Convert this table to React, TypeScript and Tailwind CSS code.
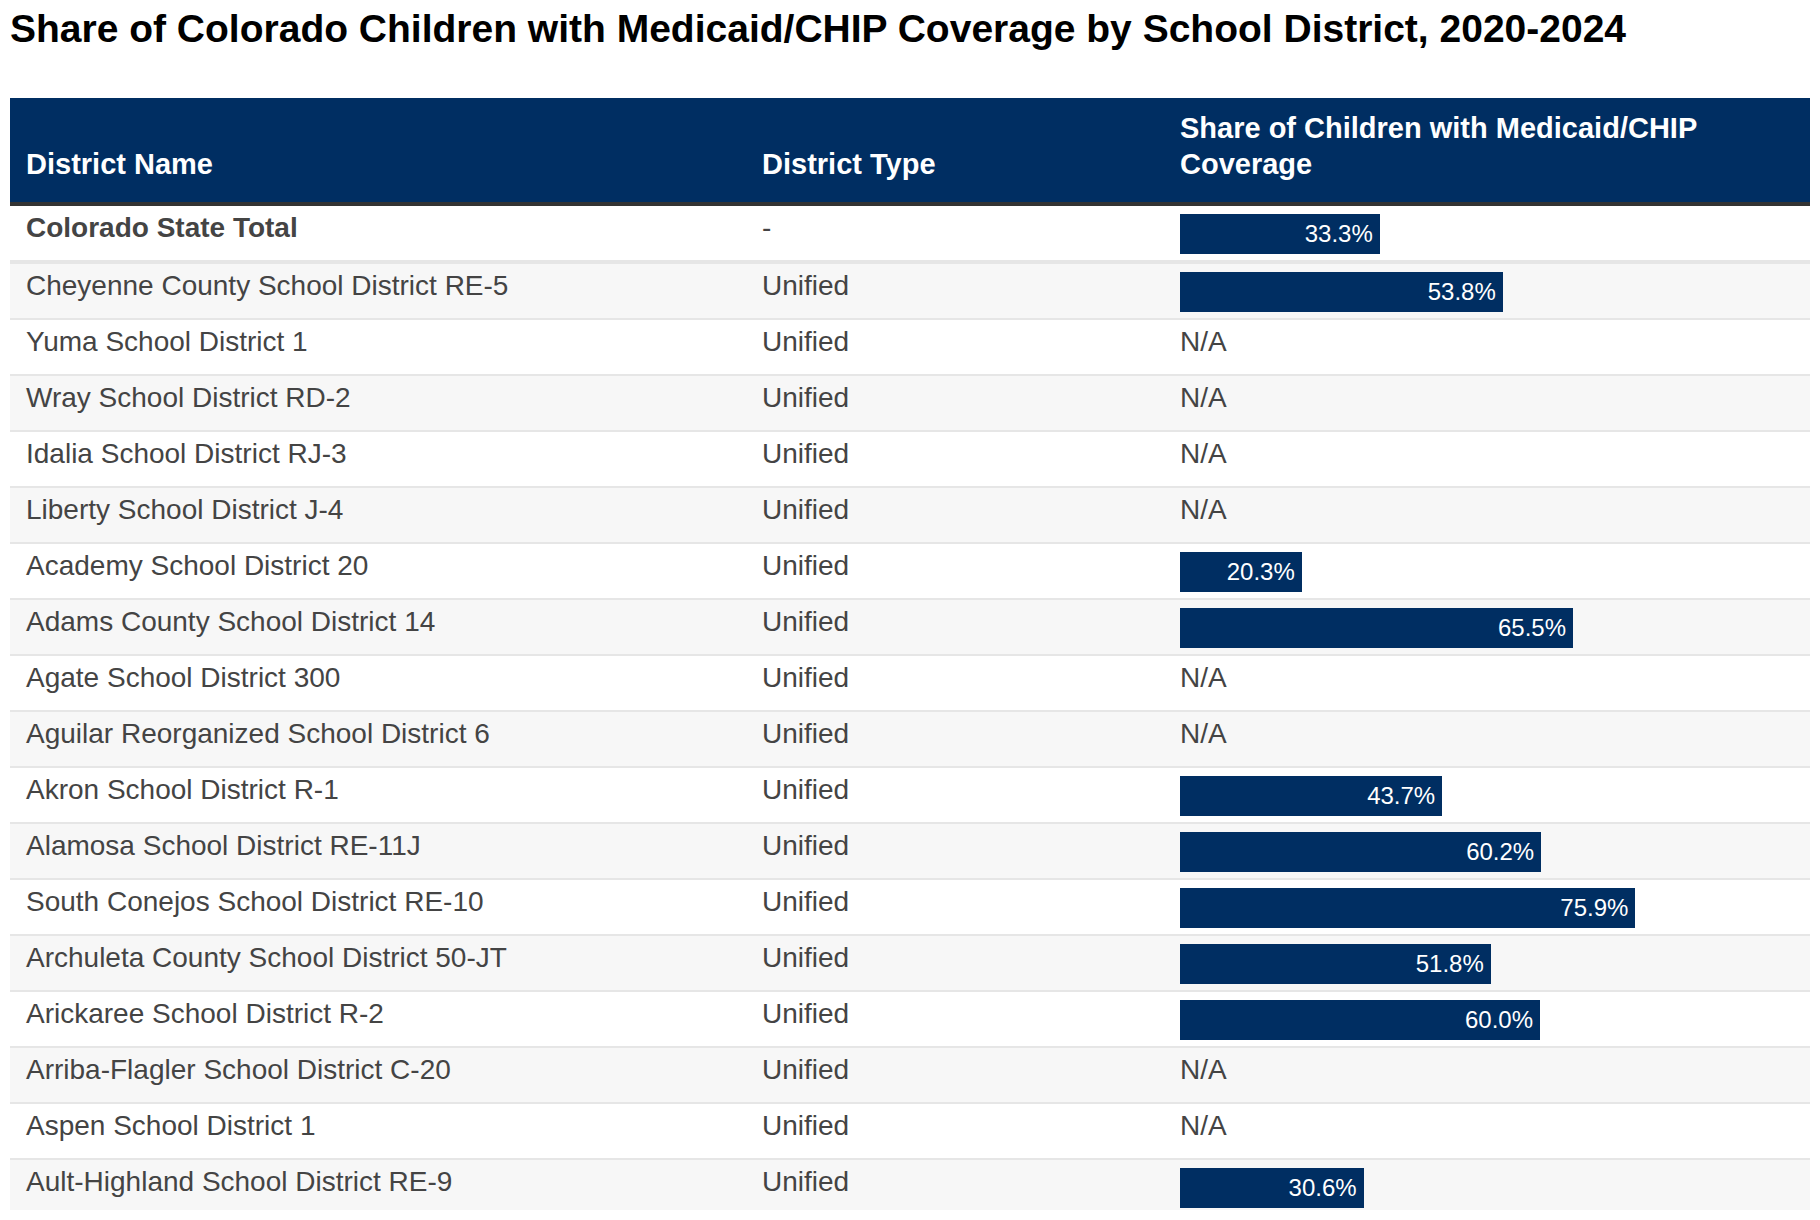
import React from 'react';

type Row = {
  name: string;
  type: string;
  share: number | null;
  total?: boolean;
};

const rows: Row[] = [
  { name: 'Colorado State Total', type: '-', share: 33.3, total: true },
  { name: 'Cheyenne County School District RE-5', type: 'Unified', share: 53.8 },
  { name: 'Yuma School District 1', type: 'Unified', share: null },
  { name: 'Wray School District RD-2', type: 'Unified', share: null },
  { name: 'Idalia School District RJ-3', type: 'Unified', share: null },
  { name: 'Liberty School District J-4', type: 'Unified', share: null },
  { name: 'Academy School District 20', type: 'Unified', share: 20.3 },
  { name: 'Adams County School District 14', type: 'Unified', share: 65.5 },
  { name: 'Agate School District 300', type: 'Unified', share: null },
  { name: 'Aguilar Reorganized School District 6', type: 'Unified', share: null },
  { name: 'Akron School District R-1', type: 'Unified', share: 43.7 },
  { name: 'Alamosa School District RE-11J', type: 'Unified', share: 60.2 },
  { name: 'South Conejos School District RE-10', type: 'Unified', share: 75.9 },
  { name: 'Archuleta County School District 50-JT', type: 'Unified', share: 51.8 },
  { name: 'Arickaree School District R-2', type: 'Unified', share: 60.0 },
  { name: 'Arriba-Flagler School District C-20', type: 'Unified', share: null },
  { name: 'Aspen School District 1', type: 'Unified', share: null },
  { name: 'Ault-Highland School District RE-9', type: 'Unified', share: 30.6 },
];

// bar is 600px wide at 100%
const BAR_SCALE = 6;

const App: React.FC = () => {
  return (
    <main className="min-h-screen bg-white font-['Liberation_Sans',Arial,sans-serif] text-[#444]">
      {/* Title */}
      <h1 className="pl-[10px] pt-[6px] mb-[47px] text-[39px] leading-[45px] font-bold text-black">
        Share of Colorado Children with Medicaid/CHIP Coverage by School District, 2020-2024
      </h1>

      {/* Table */}
      <div className="mx-[10px]">
        <div className="grid grid-cols-[736px_418px_1fr] items-end bg-[#002e62] text-white border-b-4 border-[#333] text-[29px] leading-[36px] font-bold">
          <div className="px-[16px] pt-[12px] pb-[20px]">District Name</div>
          <div className="px-[16px] pt-[12px] pb-[20px]">District Type</div>
          <div className="px-[16px] pt-[12px] pb-[20px]">Share of Children with Medicaid/CHIP Coverage</div>
        </div>

        {rows.map((row, index) => {
          const last = index === rows.length - 1;
          return (
            <div
              key={index}
              className={`grid grid-cols-[736px_418px_1fr] items-start text-[28px] leading-[31px] border-[#e6e6e6] ${
                row.total ? 'h-[58px] border-b-4' : last ? 'h-[50px]' : 'h-[56px] border-b-2'
              } ${index % 2 === 1 ? 'bg-[#f7f7f7]' : 'bg-white'}`}
            >
              <div className={`px-[16px] pt-[6px] ${row.total ? 'font-bold' : ''}`}>{row.name}</div>
              <div className="px-[16px] pt-[6px]">{row.type}</div>
              {row.share === null ? (
                <div className="px-[16px] pt-[6px]">N/A</div>
              ) : (
                <div className="px-[16px] pt-[8px]">
                  <div
                    className="h-[40px] bg-[#002e62] flex items-center justify-end pr-[7px] text-[24px] leading-none text-white"
                    style={{ width: `${row.share * BAR_SCALE}px` }}
                  >
                    {row.share.toFixed(1)}%
                  </div>
                </div>
              )}
            </div>
          );
        })}
      </div>
    </main>
  );
};

export default App;
